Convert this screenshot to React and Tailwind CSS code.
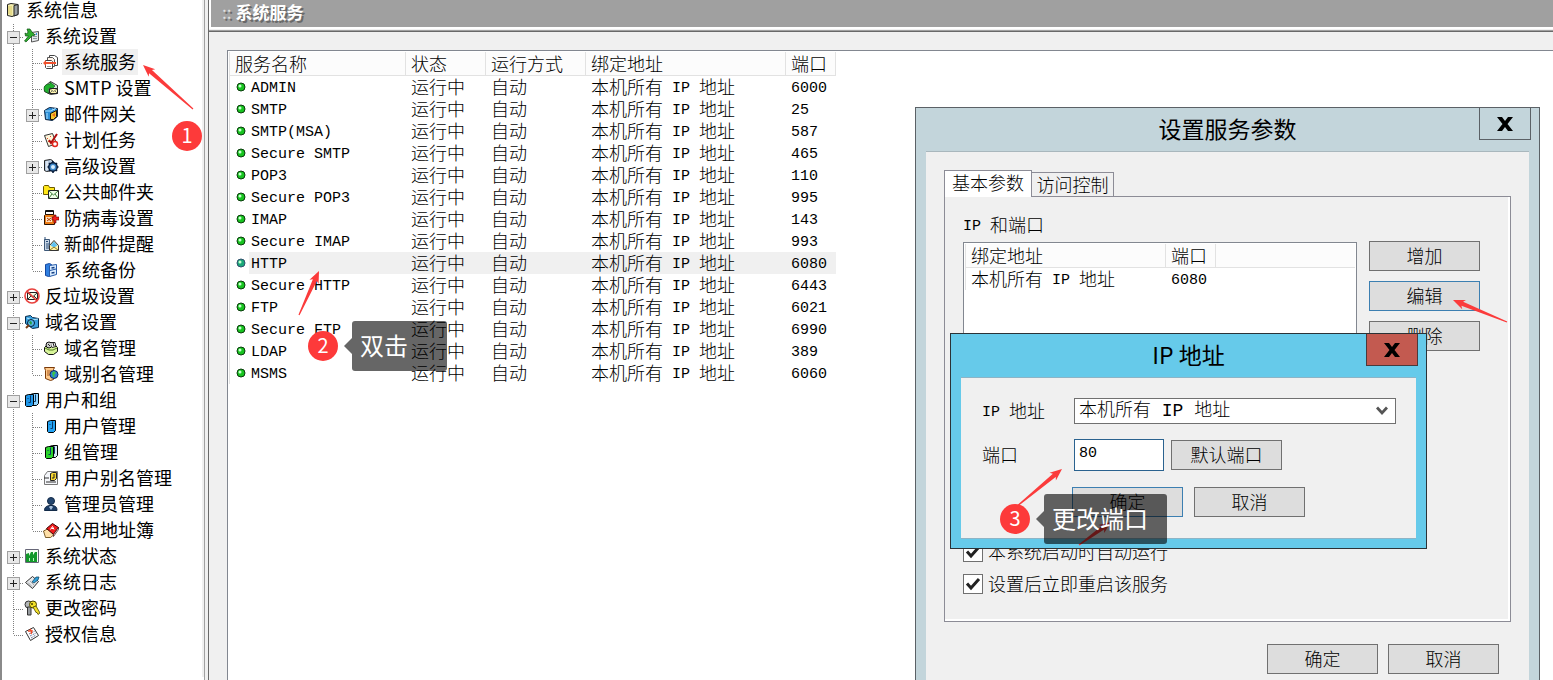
import { useState } from 'react'
import clsx from 'clsx'

const SERVICES = [
  { name: 'ADMIN', port: 6000 },
  { name: 'SMTP', port: 25 },
  { name: 'SMTP(MSA)', port: 587 },
  { name: 'Secure SMTP', port: 465 },
  { name: 'POP3', port: 110 },
  { name: 'Secure POP3', port: 995 },
  { name: 'IMAP', port: 143 },
  { name: 'Secure IMAP', port: 993 },
  { name: 'HTTP', port: 6080 },
  { name: 'Secure HTTP', port: 6443 },
  { name: 'FTP', port: 6021 },
  { name: 'Secure FTP', port: 6990 },
  { name: 'LDAP', port: 389 },
  { name: 'MSMS', port: 6060 },
]

const TREE = [
  { label: '系统信息', icon: 'info', level: 0 },
  { label: '系统设置', icon: 'settings', level: 1, box: 'minus', first: true },
  { label: '系统服务', icon: 'services', level: 2, selected: true },
  { label: 'SMTP 设置', icon: 'smtp', level: 2 },
  { label: '邮件网关', icon: 'gateway', level: 2, box: 'plus' },
  { label: '计划任务', icon: 'tasks', level: 2 },
  { label: '高级设置', icon: 'advanced', level: 2, box: 'plus' },
  { label: '公共邮件夹', icon: 'folder', level: 2 },
  { label: '防病毒设置', icon: 'antivirus', level: 2 },
  { label: '新邮件提醒', icon: 'notify', level: 2 },
  { label: '系统备份', icon: 'backup', level: 2, last: true },
  { label: '反垃圾设置', icon: 'antispam', level: 1, box: 'plus' },
  { label: '域名设置', icon: 'domain', level: 1, box: 'minus' },
  { label: '域名管理', icon: 'domainBox', level: 2 },
  { label: '域别名管理', icon: 'domainAlias', level: 2, last: true },
  { label: '用户和组', icon: 'users', level: 1, box: 'minus' },
  { label: '用户管理', icon: 'user', level: 2 },
  { label: '组管理', icon: 'group', level: 2 },
  { label: '用户别名管理', icon: 'userAlias', level: 2 },
  { label: '管理员管理', icon: 'admin', level: 2 },
  { label: '公用地址簿', icon: 'book', level: 2, last: true },
  { label: '系统状态', icon: 'status', level: 1, box: 'plus' },
  { label: '系统日志', icon: 'log', level: 1, box: 'plus' },
  { label: '更改密码', icon: 'keys', level: 1 },
  { label: '授权信息', icon: 'license', level: 1, last: true },
]

const face = (x, y, fill) => (
  <>
    <path d={`M${x} ${y + 1}l3-1h5v10l-2 2h-5l-1-1z`} fill={fill} stroke="#000" />
    <path d={`M${x + 5} ${y + 1}v7h-2M${x + 2} ${y + 4}h1`} fill="none" stroke="#0a3a6a" />
  </>
)

const ICONS = {
  info: (
    <>
      <path d="M2.500 2.500L6 1.500l7 1v10l-6 2-4.500-1z" fill="#f3edb0" stroke="#222" />
      <path d="M9 3.500l4-1v10l-4 1.500z" fill="#9aa0a4" stroke="#222" />
      <path d="M4 4v8M6 4v9" stroke="#d8c860" />
    </>
  ),
  settings: (
    <>
      <path d="M7.500 4.500l7-1v9l-7 1.500z" fill="#e4e8ea" stroke="#555" />
      <path d="M9 6.500h4M9 8.500h4M9 10.500h4" stroke="#8a9aa0" />
      <path d="M1 5l2 1 1-2-1-3h3l2 3 3 3-3 1-1 1-5 5-1.500-1 4-5-3 0z" fill="#2fae2f" stroke="#0b4f12" strokeWidth=".7" />
      <rect x="12" y="5" width="1" height="2" fill="#2f8fe0" />
    </>
  ),
  services: (
    <>
      <path d="M6.500 1.500h5l3 2v8h-8z" fill="#fff" stroke="#444" />
      <path d="M4.500 3.500h5l2 2v7h-7z" fill="#fff4ea" stroke="#555" />
      <path d="M2.500 6.500h6l1 1v7h-6l-1-1z" fill="#fff" stroke="#444" />
      <path d="M0 9l3-3v2h10v2H3v2z" fill="#f0512d" />
      <path d="M4 12.500h4" stroke="#999" />
    </>
  ),
  smtp: (
    <>
      <path d="M1.500 6.500l6-5 7 4v8l-7 1-6-3z" fill="#dbe8e2" stroke="#333" />
      <path d="M1 9c0-4 3-5 6-5V2l5 4-4 4V8C5 8 5 10 6 13 3 13 1 11 1 9z" fill="#1fb02c" stroke="#084d10" strokeWidth=".6" />
      <path d="M6.500 8.500h8v5h-8z" fill="#fff7b0" stroke="#222" />
      <path d="M7 9l3.500 2.500L14 9M7 13l2-2M14 13l-2-2" fill="none" stroke="#776" />
    </>
  ),
  gateway: (
    <>
      <path d="M1.500 4.500l5-3 8 1v8l-5 4-7-1z" fill="#2d8fd8" stroke="#0b2240" />
      <path d="M2 5h6l5-3M4 7v6M9 3l3 1" fill="none" stroke="#a8e0ff" />
      <path d="M7.500 7.500l6-3v6l-3 3h-3z" fill="#f5c62c" stroke="#221500" />
      <path d="M9 9l3-2v4z" fill="#ef6b1c" />
    </>
  ),
  tasks: (
    <>
      <path d="M1.500 3.500l8-2 4 10-8 3z" fill="#fff6da" stroke="#333" />
      <path d="M4 6l1 1M5 9l1 1M7 4l1 1" stroke="#e0482a" />
      <path d="M6 8l2 3 6-9" fill="none" stroke="#b10d0d" strokeWidth="2" />
      <circle cx="12" cy="12" r="2.500" fill="#fff" stroke="#e0261c" strokeWidth="1.400" />
    </>
  ),
  advanced: (
    <>
      <path d="M1.500 2.500l6-1 2 1v10l-6 1-2-1z" fill="#b9cbe0" stroke="#222" />
      <path d="M4 3v9" stroke="#fff" />
      <path d="M10 3v12M4.500 9h11M6 5l8 8M14 5l-8 8" stroke="#061a38" strokeWidth="1.600" />
      <circle cx="10" cy="9" r="4.200" fill="#3d86c8" stroke="#061a38" strokeWidth="1.400" />
      <circle cx="10" cy="9" r="2" fill="#d9efff" />
    </>
  ),
  folder: (
    <>
      <path d="M.5 2.500l1-1h4l1 2h5v7h-11z" fill="#ffe619" stroke="#6b5a00" />
      <path d="M5.500 6.500h10v8h-10z" fill="#f2ffe9" stroke="#222" />
      <path d="M6 7l4.500 4L15 7M6 14l3-4M15 14l-3-4" fill="none" stroke="#3f7f3a" />
    </>
  ),
  antivirus: (
    <>
      <path d="M2.500 .5h8v4h-8z" fill="#fff" stroke="#111" />
      <path d="M2.500 1.500h8" stroke="#111" />
      <path d="M1.500 5.500l1-1h8l1 1v9h-10z" fill="#ef7d16" stroke="#2a1200" />
      <path d="M3 7h6v5H3z" fill="#ffe3c0" />
      <path d="M4 8l4 3M8 8l-4 3" stroke="#b33b00" />
      <path d="M11 5h2v2h3v3h-3v3h-2v-3H9V7h2z" fill="#f3201a" stroke="#5b0000" strokeWidth=".6" />
    </>
  ),
  notify: (
    <>
      <path d="M1.500 3.500h5v11h-5z" fill="#c9d7e6" stroke="#3d5878" />
      <path d="M2 1v3M3 5.500h2M3 8h3M3 10h3M3 12h3" stroke="#2a4c77" />
      <path d="M6.500 9.500l4.500-5 4.500 5v5h-9z" fill="#fff2a6" stroke="#333" />
      <path d="M7.500 9.500l3.500-4 3.500 4-3.500 2z" fill="#5fc1f2" />
      <path d="M7 14l4-3 4 3" fill="none" stroke="#8a7a20" />
    </>
  ),
  backup: (
    <>
      <path d="M2.500 2.500l4-1 2 1v11l-3 1-3-1z" fill="#2f7fe0" stroke="#1447a0" />
      <path d="M6.500 3.500l7-1v10l-7 2z" fill="#d9ecff" stroke="#2559a8" />
      <path d="M7 8.500l6-1.500" stroke="#2559a8" />
      <path d="M8.500 6l3-.5M8.500 11l3-.5" stroke="#123c80" strokeWidth="1.400" />
    </>
  ),
  antispam: (
    <>
      <path d="M3.500 4.500h10v7h-10z" fill="#f6ffe8" stroke="#222" />
      <path d="M4 5l4.500 4L13 5M4 11l3-3M13 11l-3-3" fill="none" stroke="#333" />
      <circle cx="8" cy="8" r="7" fill="none" stroke="#e8403c" strokeWidth="1.600" />
      <path d="M3 3l10 10" stroke="#e8403c" strokeWidth="1.600" />
    </>
  ),
  domain: (
    <>
      <path d="M1.500 2.500l5-1 2 2 6 1v9l-6 1-7-5z" fill="#38a0de" stroke="#062a4a" />
      <path d="M3 4l5 2 6-1" fill="none" stroke="#b5e8ff" />
      <circle cx="7" cy="9" r="3.500" fill="#59b7ea" stroke="#02203a" />
      <path d="M5 8l2-1 1 2-1 2z" fill="#20a038" />
      <path d="M2 14l3-3" stroke="#7a3b10" strokeWidth="2" />
    </>
  ),
  domainBox: (
    <>
      <path d="M1.500 7.500l2-2h9l2 2v4l-4 3h-5l-4-3z" fill="#d8f59a" stroke="#111" />
      <circle cx="6" cy="5" r="3" fill="#ccc" stroke="#111" />
      <path d="M8 2.500l4 0 1 4-4 1M5 4l2 2M10 3l1 3" fill="#eee" stroke="#222" />
      <path d="M2 8l4 2h4l4-2" fill="none" stroke="#4f7a1c" />
    </>
  ),
  domainAlias: (
    <>
      <path d="M1.500 1.500h10l-1 2v10l-3 1-5-2v-8z" fill="#ffc98a" stroke="#7b3a08" />
      <path d="M4 5h5M4 7h4M4 9h3" stroke="#a8561c" />
      <circle cx="11" cy="8.500" r="4" fill="#2b7fd8" stroke="#0b2e60" />
      <path d="M9 7l2-2 2 2-2 2 1 2-2 0z" fill="#3cc24a" />
    </>
  ),
  users: (
    <>
      {face(6.5, 1.5, '#8fd4ff')}
      {face(1.5, 2.5, '#1f96e8')}
    </>
  ),
  user: face(4.5, 2.5, '#22a2f2'),
  group: (
    <>
      {face(6.5, 1.5, '#d2e8f5')}
      {face(2.5, 2.5, '#2bd32b')}
    </>
  ),
  userAlias: (
    <>
      <path d="M4.500 1.500h10v13h-13v-9z" fill="#f4f6fa" stroke="#777" />
      <path d="M1 8h5M3 12h10" stroke="#333" />
      <path d="M7.500 3.500l2-1h4v6l-2 2h-4z" fill="#f3d331" stroke="#222" />
      <path d="M11 4v4h-2" fill="none" stroke="#222" />
    </>
  ),
  admin: (
    <>
      <path d="M1.500 14.500c0-4 3-4.500 4.500-5h4c2 .5 4 1 4 5z" fill="#1d3d66" stroke="#122a48" />
      <circle cx="8" cy="5" r="3.500" fill="#24466f" stroke="#122a48" />
      <path d="M7 10h2l1 1-2 3-2-3z" fill="#a9c2de" />
    </>
  ),
  book: (
    <>
      <path d="M.5 9l4-2 5 2 1 4-3 2.500h-5z" fill="#ffe0a8" stroke="#5a3a00" strokeWidth=".8" />
      <path d="M3.500 6.500l6-5 6 4-5 7z" fill="#ee1c1c" stroke="#3b0000" />
      <path d="M10.500 12.500l5-7v2l-5 7z" fill="#fff" stroke="#3b0000" strokeWidth=".7" />
      <path d="M7.500 7.500l2-3 1.500 3M8.500 6.500h2" fill="none" stroke="#fff" />
    </>
  ),
  status: (
    <>
      <path d="M1.500 1.500h13v13h-13z" fill="#f2fff2" stroke="#667" />
      <path d="M2 14V6l3-1v3l2-4h2v3l2-3h2v10z" fill="#12992a" />
      <path d="M5.500 10v3M9.500 10v3" stroke="#b8f5c0" />
    </>
  ),
  log: (
    <>
      <path d="M1.500 8.500l7-6 6 5-6 7z" fill="#e6e8ea" stroke="#333" />
      <path d="M4 8.500l4 4M6 7l4 4" stroke="#a8acb0" />
      <path d="M8 8l4-5 3 0-1 3-4 3z" fill="#2f9fd8" stroke="#0c3c58" strokeWidth=".7" />
    </>
  ),
  keys: (
    <>
      <circle cx="4.500" cy="4.500" r="3.500" fill="#b4b7ba" stroke="#333" />
      <path d="M3.500 7h3.500v8h-3.500z" fill="#989ca0" stroke="#333" />
      <circle cx="9" cy="4.500" r="3.500" fill="#f1e02a" stroke="#4b4300" />
      <path d="M9 7l3-1 4 7-2 1.500-1-2-1 0z" fill="#f1e02a" stroke="#4b4300" strokeWidth=".8" />
      <circle cx="8" cy="4" r="1" fill="#4b4300" />
    </>
  ),
  license: (
    <>
      <path d="M1.500 5.500l8-4 5 8-8 5z" fill="#fff" stroke="#333" />
      <path d="M5 8l6-3M6 10l6-3M7 12l5-3" stroke="#6f7da0" strokeDasharray="2 1" />
      <path d="M4 5l4 0-1 3M6 3l2 3" fill="none" stroke="#ef4a28" strokeWidth="1.400" />
    </>
  ),
}

const CJK = 'font-["Noto_Sans_CJK_SC",sans-serif]'

// Half-width runs use a monospaced face so two Latin letters fill one Chinese cell.
function Sim({ children }) {
  const runs = String(children).match(/[\x20-\x7e]+|[^\x20-\x7e]+/g) || []
  return (
    <span className='inline-flex h-[22px] items-center pb-0.5 align-top text-[18px] leading-5 font-light whitespace-pre font-["Noto_Sans_CJK_SC",sans-serif]'>
      {runs.map((run, i) => (
        <span
          key={i}
          className={run.charCodeAt(0) < 127 ? 'pt-[5px] text-[15px] leading-none font-["Liberation_Mono",monospace]' : undefined}
        >
          {run}
        </span>
      ))}
    </span>
  )
}

function Guide({ branch, box, first, last }) {
  return (
    <svg width="19" height="26" viewBox="0 0 19 26" shapeRendering="crispEdges" className="block shrink-0">
      <path d={last ? 'M9.500 0v14' : first ? 'M9.500 1v25' : 'M9.500 0v26'} stroke="#808080" strokeDasharray="1 1" />
      {branch && <path d="M10 14.500h9" stroke="#808080" strokeDasharray="1 1" />}
      {box && (
        <>
          <rect x="3.500" y="8.500" width="12" height="12" fill="#e8e8e8" stroke="#a0a0a0" />
          <path d={box === 'plus' ? 'M6 14.500h7M9.500 11v7' : 'M6 14.500h7'} stroke="#222" />
        </>
      )}
    </svg>
  )
}

function TreeItem({ item }) {
  return (
    <li className="flex h-[26px] items-center">
      {item.level === 2 && <Guide />}
      {item.level > 0 &&
        (item.box ? (
          <button type="button" aria-label={item.label}>
            <Guide branch box={item.box} first={item.first} last={item.last} />
          </button>
        ) : (
          <Guide branch last={item.last} />
        ))}
      <svg width="16" height="16" viewBox="0 0 16 16" fill="none" className="mx-px shrink-0">
        {ICONS[item.icon]}
      </svg>
      <a
        href="#"
        className={clsx('ml-0.5 px-0.5 pb-0.5 text-[18px] leading-6 whitespace-nowrap text-black', CJK, item.selected && 'bg-[#f0f0f0]')}
      >
        {item.label}
      </a>
    </li>
  )
}

function Sidebar() {
  return (
    <aside className="w-[205px] shrink-0 overflow-hidden border-r border-l-2 border-r-[#a0a0a0] border-l-[#8a8a8a] bg-white">
      <nav className="h-full border-r-2 border-[#f0f0f0]">
        <ul className="-mt-[3px] pl-0.5">
          {TREE.map((item) => (
            <TreeItem key={item.label} item={item} />
          ))}
        </ul>
      </nav>
    </aside>
  )
}

function Dot({ selected }) {
  return (
    <svg width="10" height="10" viewBox="0 0 10 10">
      <circle cx="5" cy="5" r="4" fill={selected ? '#1aa878' : '#17c41f'} stroke={selected ? '#31506e' : '#0a3a0c'} />
      <circle cx="4" cy="4" r="1.500" fill="#c8ffd0" />
    </svg>
  )
}

function Th({ children }) {
  return (
    <th className="h-6 border-r border-b border-[#e2e2e2] bg-[#fcfcfc] p-0 pl-[5px] text-left leading-[22px]">
      <Sim>{children}</Sim>
    </th>
  )
}

function ServiceTable() {
  const [selected, setSelected] = useState('HTTP')
  return (
    <table className="w-[606px] table-fixed border-separate border-spacing-0 border-l border-[#e2e2e2]">
      <colgroup>
        <col className="w-[176px]" />
        <col className="w-[80px]" />
        <col className="w-[100px]" />
        <col className="w-[200px]" />
        <col className="w-[50px]" />
      </colgroup>
      <thead>
        <tr>
          <Th>服务名称</Th>
          <Th>状态</Th>
          <Th>运行方式</Th>
          <Th>绑定地址</Th>
          <Th>端口</Th>
        </tr>
      </thead>
      <tbody>
        {SERVICES.map((s) => {
          const on = s.name === selected
          const cell = clsx('h-[22px] p-0 pl-[5px] leading-[22px] whitespace-nowrap', on && 'bg-[#f0f0f0]')
          return (
            <tr key={s.name} onClick={() => setSelected(s.name)}>
              <td className="h-[22px] p-0 leading-[22px]">
                <div className="flex items-center pl-1.5">
                  <Dot selected={on} />
                  <span className={clsx('ml-[3px] h-[22px] flex-1 pl-0.5', on && 'bg-[#f0f0f0]')}>
                    <Sim>{s.name}</Sim>
                  </span>
                </div>
              </td>
              <td className={cell}><Sim>运行中</Sim></td>
              <td className={cell}><Sim>自动</Sim></td>
              <td className={cell}><Sim>本机所有 IP 地址</Sim></td>
              <td className={cell}><Sim>{s.port}</Sim></td>
            </tr>
          )
        })}
      </tbody>
    </table>
  )
}

function WinButton({ children, focused }) {
  return (
    <button
      type="button"
      className={clsx(
        'h-[30px] w-[111px] shrink-0 border bg-[#dddddd] leading-[22px]',
        focused ? 'border-[#3c7fb1]' : 'border-[#707070]'
      )}
    >
      <Sim>{children}</Sim>
    </button>
  )
}

function CheckBox({ id, label }) {
  return (
    <div className="flex h-5 items-center gap-[5px]">
      <span className="grid">
        <input
          id={id}
          type="checkbox"
          defaultChecked
          className="peer col-start-1 row-start-1 size-5 appearance-none border border-[#707070] bg-white"
        />
        <svg viewBox="0 0 20 20" className="pointer-events-none invisible col-start-1 row-start-1 size-5 peer-checked:visible">
          <path d="M4 9.500l4 4.500 8-9" fill="none" stroke="#222" strokeWidth="3" />
        </svg>
      </span>
      <label htmlFor={id} className="leading-[22px]"><Sim>{label}</Sim></label>
    </div>
  )
}

function TitleBar({ title, closeClass }) {
  return (
    <div className="relative flex h-[43px] items-center justify-center">
      <h2 className={clsx('pb-1 text-[23px] leading-9 text-black', CJK)}>{title}</h2>
      <button
        type="button"
        aria-label="关闭"
        className={clsx('absolute top-0 right-2 flex h-8 w-[52px] items-center justify-center border border-t-0', closeClass)}
      >
        <svg width="16" height="14" viewBox="0 0 16 14">
          <path d="M0 0h5l3 4 3-4h5l-5.500 7L16 14h-5l-3-4-3 4H0l5.500-7z" fill="#000" />
        </svg>
      </button>
    </div>
  )
}

function ServiceDialog() {
  return (
    <section className="absolute top-[107px] left-[915px] w-[625px] border border-[#5b6166] bg-[#c3d5db]">
      <TitleBar title="设置服务参数" closeClass="border-[#5b6166]" />
      <div className="mx-2.5 mb-2.5 border-t border-[#a9b7bd] bg-[#f0f0f0] px-[18px] pt-[18px] pb-4">
        <div className="flex items-end">
          <button type="button" className="z-10 -mb-px h-[27px] w-[88px] border border-b-0 border-[#8c8c96] bg-white pb-0.5 leading-[22px]">
            <Sim>基本参数</Sim>
          </button>
          <button type="button" className="-ml-px h-6 w-[83px] border border-b-0 border-[#8c8c96] leading-[22px]">
            <Sim>访问控制</Sim>
          </button>
        </div>
        <div className="border border-[#8c8c96]">
          <div className="border-r-2 border-b-2 border-white pt-4 pr-7 pb-[25px] pl-[18px]">
            <p className="mb-1 flex h-6 items-center"><Sim>IP 和端口</Sim></p>
            <div className="flex items-start gap-3">
              <div className="mt-px h-[150px] flex-1 border border-[#828790] bg-white p-px">
                <table className="w-full table-fixed border-separate border-spacing-0 border-l border-[#e2e2e2]">
                  <colgroup>
                    <col className="w-[200px]" />
                    <col className="w-[50px]" />
                    <col />
                  </colgroup>
                  <thead>
                    <tr>
                      <Th>绑定地址</Th>
                      <Th>端口</Th>
                      <td className="border-b border-[#e2e2e2] bg-[#fcfcfc]" />
                    </tr>
                  </thead>
                  <tbody>
                    <tr>
                      <td className="h-[22px] p-0 pl-[5px] leading-[22px]"><Sim>本机所有 IP 地址</Sim></td>
                      <td className="h-[22px] p-0 pl-[5px] leading-[22px]"><Sim>6080</Sim></td>
                      <td />
                    </tr>
                  </tbody>
                </table>
              </div>
              <div className="flex flex-col gap-2.5">
                <WinButton>增加</WinButton>
                <WinButton focused>编辑</WinButton>
                <WinButton>删除</WinButton>
              </div>
            </div>
            <div className="mt-[150px] flex flex-col gap-3">
              <CheckBox id="auto-start" label="本系统启动时自动运行" />
              <CheckBox id="restart" label="设置后立即重启该服务" />
            </div>
          </div>
        </div>
        <div className="mt-[22px] flex justify-end gap-2.5 pr-3">
          <WinButton>确定</WinButton>
          <WinButton>取消</WinButton>
        </div>
      </div>
    </section>
  )
}

function AddressDialog() {
  return (
    <section className="absolute top-[333px] left-[950px] w-[477px] border border-[#2b3236] bg-[#66caea]">
      <TitleBar title="IP 地址" closeClass="border-[#4a3a3c] bg-[#c35a50]" />
      <form className="mx-2.5 mb-[9px] border-y border-[#8db4c6] bg-[#f0f0f0] pt-5 pr-5 pb-[21px] pl-[21px]">
        <div className="flex items-center">
          <label htmlFor="ip" className="w-[92px] shrink-0 leading-[22px]"><Sim>IP 地址</Sim></label>
          <div className="relative flex-1">
            <select
              id="ip"
              className='block h-[26px] w-full appearance-none border border-[#707070] bg-white pl-1 text-[18px] leading-6 font-light font-["Liberation_Mono","Noto_Sans_CJK_SC",monospace]'
            >
              <option>本机所有 IP 地址</option>
            </select>
            <svg viewBox="0 0 12 10" className="pointer-events-none absolute top-2 right-2 h-2.5 w-3">
              <path d="M1 1.500l5 5.500 5-5.500" fill="none" stroke="#555" strokeWidth="2.800" />
            </svg>
          </div>
        </div>
        <div className="mt-[15px] flex items-center">
          <label htmlFor="port" className="w-[92px] shrink-0 leading-[22px]"><Sim>端口</Sim></label>
          <input
            id="port"
            defaultValue="80"
            className='mr-[7px] h-8 w-[90px] border border-[#2a628f] bg-white pb-1 pl-1 text-[15px] font-["Liberation_Mono",monospace]'
          />
          <WinButton>默认端口</WinButton>
        </div>
        <div className="mt-4 flex gap-[11px] pl-[90px]">
          <WinButton focused>确定</WinButton>
          <WinButton>取消</WinButton>
        </div>
      </form>
    </section>
  )
}

function Arrow({ from, to }) {
  const dx = to[0] - from[0]
  const dy = to[1] - from[1]
  const len = Math.hypot(dx, dy)
  const ux = dx / len
  const uy = dy / len
  // distance back from the tip, distance to the side
  const at = (back, side) => `${to[0] - ux * back - uy * side},${to[1] - uy * back + ux * side}`
  const points = [at(0, 0), at(12, 5), at(10, 2.2), at(len, 0.6), at(len, -0.6), at(10, -2.2), at(12, -5)]
  return <polygon points={points.join(' ')} fill="#fb3b3b" />
}

function Step({ n, className }) {
  return (
    <span className={clsx('absolute flex size-[30px] items-center justify-center rounded-full bg-[#fd3a3a] pb-0.5 text-[20px] leading-none text-white', CJK, className)}>
      {n}
    </span>
  )
}

function Callout({ children, className }) {
  return (
    <div className={clsx('absolute flex h-[50px] items-center', className)}>
      <svg width="8" height="16" viewBox="0 0 8 16">
        <path d="M8 0v16L0 8z" fill="#000" fillOpacity=".6" />
      </svg>
      <span className={clsx('h-full flex-1 rounded-[3px] bg-black/60 pl-2 text-[24px] leading-[48px] whitespace-nowrap text-white', CJK)}>
        {children}
      </span>
    </div>
  )
}

function Notes() {
  return (
    <div className="pointer-events-none absolute inset-0">
      <svg className="absolute inset-0 size-full">
        <Arrow from={[193, 109]} to={[143, 65]} />
        <Arrow from={[299, 315]} to={[319, 271]} />
        <Arrow from={[1016, 507]} to={[1062, 469]} />
        <Arrow from={[1507, 322]} to={[1453, 300]} />
        <Arrow from={[1079, 545]} to={[1111, 522]} />
      </svg>
      <Step n={1} className="top-[121px] left-[172px]" />
      <Step n={2} className="top-[331px] left-[308px]" />
      <Step n={3} className="top-[504px] left-[1000px]" />
      <Callout className="top-[321px] left-[344px] w-[103px]">双击</Callout>
      <Callout className="top-[494px] left-[1036px] w-[131px]">更改端口</Callout>
    </div>
  )
}

export default function App() {
  return (
    <div className="relative flex h-screen overflow-hidden bg-[#f0f0f0] text-black">
      <Sidebar />
      <main className="ml-[3px] flex min-w-0 flex-1 flex-col border-l border-[#696969]">
        <header className="border-b border-[#696969]">
          <div className="border-b border-[#a0a0a0] pb-px">
            <div className="border-b-2 border-l-2 border-white">
              <h1 className={clsx('flex h-[27px] items-center gap-1 bg-[#a0a0a0] pb-1 pl-[11px] text-[17px] font-bold text-white [text-shadow:2px_2px_0_#696969]', CJK)}>
                <span className="font-normal text-[#e0e0e0]">::</span>
                系统服务
              </h1>
            </div>
          </div>
        </header>
        <div className="mt-[18px] ml-[18px] flex-1 border-t border-l border-[#828790] bg-white pt-px pl-px">
          <ServiceTable />
        </div>
      </main>
      <ServiceDialog />
      <AddressDialog />
      <Notes />
    </div>
  )
}
